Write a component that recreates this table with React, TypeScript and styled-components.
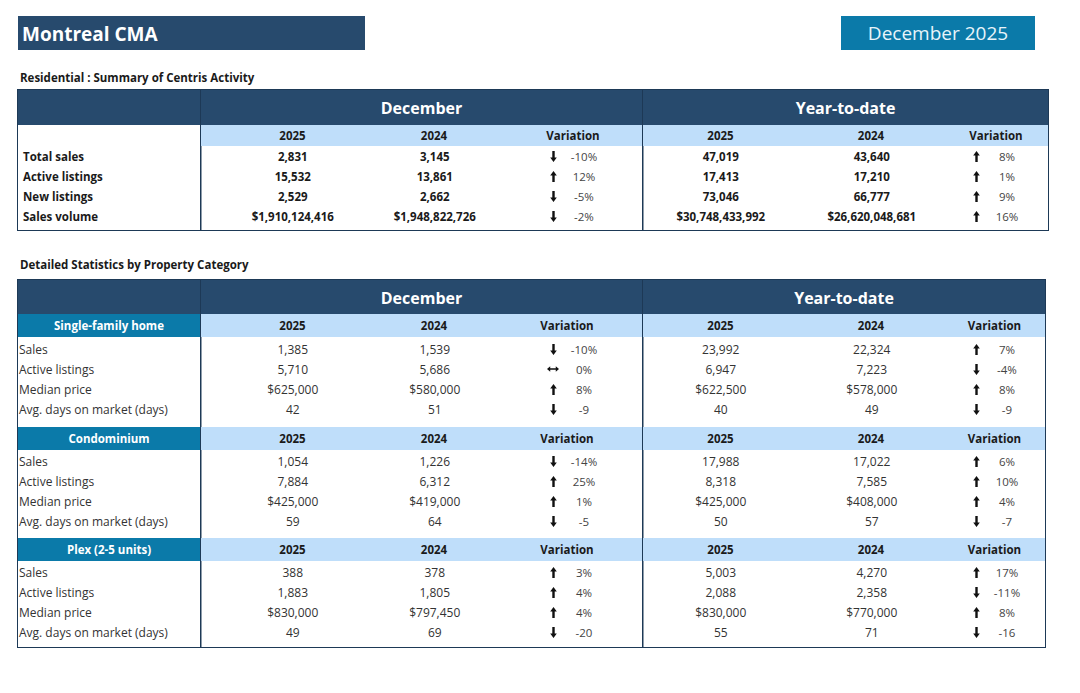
import React from "react";
import styled, { createGlobalStyle } from "styled-components";

const NAVY = "#274a6d";
const TEAL = "#0b7aa9";
const LIGHT = "#bfdefa";
const LINE = "#1d3956";

const GlobalStyle = createGlobalStyle`
  * { box-sizing: border-box; }
  body {
    margin: 0;
    background: #ffffff;
    font-family: "Open Sans", "Noto Sans", sans-serif;
    color: #222;
  }
`;

const Page = styled.div`
  width: 1080px;
  height: 693px;
  padding: 16px 0 0 17px;
  background: #fff;
`;

const TopBar = styled.div`
  display: flex;
  justify-content: space-between;
  align-items: flex-start;
  padding-right: 45px;
`;

const TitleBox = styled.div`
  width: 347px;
  height: 34px;
  margin-left: 1px;
  background: ${NAVY};
  color: #fff;
  font-weight: 700;
  font-size: 19px;
  display: flex;
  align-items: center;
  padding-left: 4px;
  padding-top: 2px;
`;

const DateBox = styled.div`
  width: 194px;
  height: 34px;
  background: ${TEAL};
  color: #e8f4fa;
  font-size: 19px;
  display: flex;
  align-items: center;
  justify-content: center;
`;

const SectionTitle = styled.div<{ $top: number; $bottom: number }>`
  font-weight: 700;
  font-size: 11.5px;
  line-height: 16px;
  padding-left: 3px;
  margin-top: ${(p) => p.$top}px;
  margin-bottom: ${(p) => p.$bottom}px;
  color: #1a1a1a;
`;

const Table = styled.div<{ $width: number }>`
  width: ${(p) => p.$width}px;
  border: 1px solid ${LINE};
`;

const COLS = "182px 184px 100px 158px 156px 146px 1fr";

const Grid = styled.div`
  display: grid;
  grid-template-columns: ${COLS};
`;

const HeaderRow = styled(Grid)<{ $h: number }>`
  height: ${(p) => p.$h}px;
  background: ${NAVY};
  color: #fff;
  font-weight: 700;
  font-size: 16px;
`;

const GroupTitle = styled.div<{ $span: string }>`
  grid-column: ${(p) => p.$span};
  border-left: 1.5px solid ${LINE};
  display: flex;
  align-items: center;
  justify-content: center;
  padding-top: 1px;
`;

const SubRow = styled(Grid)<{ $h: number }>`
  height: ${(p) => p.$h}px;
  font-weight: 700;
  font-size: 11.5px;
  color: #1a1a1a;
`;

const SubLabel = styled.div<{ $teal: boolean }>`
  background: ${(p) => (p.$teal ? TEAL : "#fff")};
  color: #fff;
  display: flex;
  align-items: center;
  justify-content: center;
  font-size: 11.5px;
`;

const SubCell = styled.div<{ $divider?: boolean; $pl?: number }>`
  background: ${LIGHT};
  display: flex;
  align-items: center;
  justify-content: center;
  padding-left: ${(p) => p.$pl ?? 0}px;
  border-left: ${(p) => (p.$divider ? `1.5px solid ${LINE}` : "none")};
`;

const RowBlock = styled.div<{ $pt: number; $pb: number }>`
  display: grid;
  grid-template-columns: ${COLS};
  grid-auto-rows: 20px;
  padding-top: ${(p) => p.$pt}px;
  padding-bottom: ${(p) => p.$pb}px;
  background-image: linear-gradient(${LINE}, ${LINE}), linear-gradient(${LINE}, ${LINE});
  background-size: 1.5px 100%, 1.5px 100%;
  background-position: 182px 0, 624px 0;
  background-repeat: no-repeat;
`;

const Label = styled.div<{ $bold: boolean }>`
  display: flex;
  align-items: center;
  padding-left: ${(p) => (p.$bold ? 5 : 1)}px;
  font-weight: ${(p) => (p.$bold ? 700 : 400)};
  font-size: ${(p) => (p.$bold ? 11.5 : 12)}px;
  color: ${(p) => (p.$bold ? "#1a1a1a" : "#333")};
  white-space: nowrap;
`;

const Num = styled.div<{ $bold: boolean }>`
  display: flex;
  align-items: center;
  justify-content: center;
  padding-left: 1.5px;
  font-weight: ${(p) => (p.$bold ? 700 : 400)};
  font-size: ${(p) => (p.$bold ? 11.5 : 12)}px;
  color: ${(p) => (p.$bold ? "#1a1a1a" : "#333")};
  white-space: nowrap;
`;

const VarCell = styled.div<{ $pl: number }>`
  display: flex;
  align-items: center;
  padding-left: ${(p) => p.$pl}px;
  font-size: 11.5px;
  color: #444;
`;

const ArrowBox = styled.span`
  width: 12px;
  display: flex;
  justify-content: center;
  align-items: center;
`;

const VarValue = styled.span`
  width: 50px;
  text-align: center;
`;

type Dir = "up" | "down" | "flat";

const Arrow = ({ dir }: { dir: Dir }) => {
  if (dir === "flat") {
    return (
      <svg width="13" height="6" viewBox="0 0 13 6">
        <path d="M0 3 L3.5 0 L3.5 2.1 L9.5 2.1 L9.5 0 L13 3 L9.5 6 L9.5 3.9 L3.5 3.9 L3.5 6 Z" fill="#111" />
      </svg>
    );
  }
  return (
    <svg
      width="7"
      height="11"
      viewBox="0 0 7 11"
      style={dir === "down" ? { transform: "rotate(180deg)" } : undefined}
    >
      <path d="M3.5 0 L6.8 4.6 L4.7 4.6 L4.7 11 L2.3 11 L2.3 4.6 L0.2 4.6 Z" fill="#111" />
    </svg>
  );
};

type Var = [Dir, string];
type Row = {
  label: string;
  d25: string;
  d24: string;
  dv: Var;
  y25: string;
  y24: string;
  yv: Var;
};

const summary: Row[] = [
  { label: "Total sales", d25: "2,831", d24: "3,145", dv: ["down", "-10%"], y25: "47,019", y24: "43,640", yv: ["up", "8%"] },
  { label: "Active listings", d25: "15,532", d24: "13,861", dv: ["up", "12%"], y25: "17,413", y24: "17,210", yv: ["up", "1%"] },
  { label: "New listings", d25: "2,529", d24: "2,662", dv: ["down", "-5%"], y25: "73,046", y24: "66,777", yv: ["up", "9%"] },
  { label: "Sales volume", d25: "$1,910,124,416", d24: "$1,948,822,726", dv: ["down", "-2%"], y25: "$30,748,433,992", y24: "$26,620,048,681", yv: ["up", "16%"] },
];

type Section = { title: string; pt: number; pb: number; rows: Row[] };

const sections: Section[] = [
  {
    title: "Single-family home",
    pt: 2,
    pb: 8,
    rows: [
      { label: "Sales", d25: "1,385", d24: "1,539", dv: ["down", "-10%"], y25: "23,992", y24: "22,324", yv: ["up", "7%"] },
      { label: "Active listings", d25: "5,710", d24: "5,686", dv: ["flat", "0%"], y25: "6,947", y24: "7,223", yv: ["down", "-4%"] },
      { label: "Median price", d25: "$625,000", d24: "$580,000", dv: ["up", "8%"], y25: "$622,500", y24: "$578,000", yv: ["up", "8%"] },
      { label: "Avg. days on market (days)", d25: "42", d24: "51", dv: ["down", "-9"], y25: "40", y24: "49", yv: ["down", "-9"] },
    ],
  },
  {
    title: "Condominium",
    pt: 1,
    pb: 7,
    rows: [
      { label: "Sales", d25: "1,054", d24: "1,226", dv: ["down", "-14%"], y25: "17,988", y24: "17,022", yv: ["up", "6%"] },
      { label: "Active listings", d25: "7,884", d24: "6,312", dv: ["up", "25%"], y25: "8,318", y24: "7,585", yv: ["up", "10%"] },
      { label: "Median price", d25: "$425,000", d24: "$419,000", dv: ["up", "1%"], y25: "$425,000", y24: "$408,000", yv: ["up", "4%"] },
      { label: "Avg. days on market (days)", d25: "59", d24: "64", dv: ["down", "-5"], y25: "50", y24: "57", yv: ["down", "-7"] },
    ],
  },
  {
    title: "Plex (2-5 units)",
    pt: 1,
    pb: 5,
    rows: [
      { label: "Sales", d25: "388", d24: "378", dv: ["up", "3%"], y25: "5,003", y24: "4,270", yv: ["up", "17%"] },
      { label: "Active listings", d25: "1,883", d24: "1,805", dv: ["up", "4%"], y25: "2,088", y24: "2,358", yv: ["down", "-11%"] },
      { label: "Median price", d25: "$830,000", d24: "$797,450", dv: ["up", "4%"], y25: "$830,000", y24: "$770,000", yv: ["up", "8%"] },
      { label: "Avg. days on market (days)", d25: "49", d24: "69", dv: ["down", "-20"], y25: "55", y24: "71", yv: ["down", "-16"] },
    ],
  },
];

const Variation = ({ v, pl }: { v: Var; pl: number }) => (
  <VarCell $pl={pl}>
    <ArrowBox>
      <Arrow dir={v[0]} />
    </ArrowBox>
    <VarValue>{v[1]}</VarValue>
  </VarCell>
);

const DataRows = ({ rows, bold }: { rows: Row[]; bold: boolean }) => (
  <>
    {rows.map((r) => (
      <React.Fragment key={r.label}>
        <Label $bold={bold}>{r.label}</Label>
        <Num $bold={bold}>{r.d25}</Num>
        <Num $bold={bold}>{r.d24}</Num>
        <Variation v={r.dv} pl={63} />
        <Num $bold={bold}>{r.y25}</Num>
        <Num $bold={bold}>{r.y24}</Num>
        <Variation v={r.yv} pl={26} />
      </React.Fragment>
    ))}
  </>
);

const SubHeader = ({ title, h, varPl }: { title?: string; h: number; varPl: number }) => (
  <SubRow $h={h}>
    <SubLabel $teal={!!title}>{title ?? ""}</SubLabel>
    <SubCell $divider>2025</SubCell>
    <SubCell>2024</SubCell>
    <SubCell $pl={varPl}>Variation</SubCell>
    <SubCell $divider>2025</SubCell>
    <SubCell>2024</SubCell>
    <SubCell>Variation</SubCell>
  </SubRow>
);

const Header = ({ h }: { h: number }) => (
  <HeaderRow $h={h}>
    <div />
    <GroupTitle $span="2 / 5">December</GroupTitle>
    <GroupTitle $span="5 / 8">Year-to-date</GroupTitle>
  </HeaderRow>
);

export default function App() {
  return (
    <>
      <GlobalStyle />
      <Page>
        <TopBar>
          <TitleBox>Montreal CMA</TitleBox>
          <DateBox>December 2025</DateBox>
        </TopBar>

        <SectionTitle $top={20} $bottom={3}>Residential : Summary of Centris Activity</SectionTitle>
        <Table $width={1032}>
          <Header h={35} />
          <SubHeader h={21} varPl={20} />
          <RowBlock $pt={0} $pb={4}>
            <DataRows rows={summary} bold />
          </RowBlock>
        </Table>

        <SectionTitle $top={26} $bottom={6}>Detailed Statistics by Property Category</SectionTitle>
        <Table $width={1029}>
          <Header h={34} />
          {sections.map((s) => (
            <React.Fragment key={s.title}>
              <SubHeader title={s.title} h={23} varPl={8} />
              <RowBlock $pt={s.pt} $pb={s.pb}>
                <DataRows rows={s.rows} bold={false} />
              </RowBlock>
            </React.Fragment>
          ))}
        </Table>
      </Page>
    </>
  );
}
